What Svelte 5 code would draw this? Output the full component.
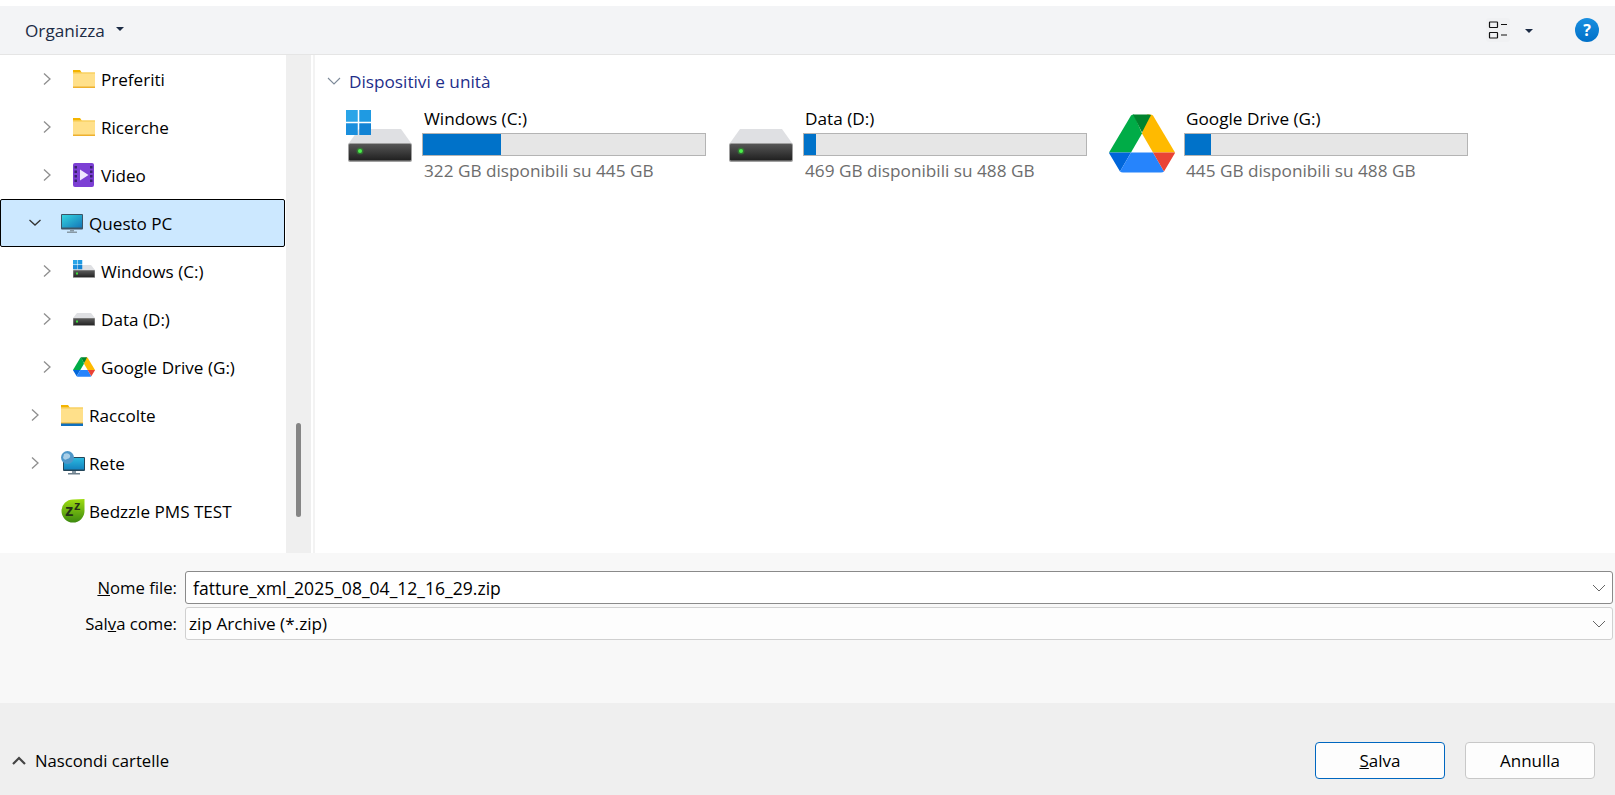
<script>
	const navRows = [
		{ label: 'Preferiti', icon: 'folder', level: 1, arrow: 'right' },
		{ label: 'Ricerche', icon: 'folder', level: 1, arrow: 'right' },
		{ label: 'Video', icon: 'video', level: 1, arrow: 'right' },
		{ label: 'Questo PC', icon: 'pc', level: 0, arrow: 'down', selected: true },
		{ label: 'Windows (C:)', icon: 'winDrive', level: 1, arrow: 'right' },
		{ label: 'Data (D:)', icon: 'drive', level: 1, arrow: 'right' },
		{ label: 'Google Drive (G:)', icon: 'gdrive', level: 1, arrow: 'right' },
		{ label: 'Raccolte', icon: 'library', level: 0, arrow: 'right' },
		{ label: 'Rete', icon: 'network', level: 0, arrow: 'right' },
		{ label: 'Bedzzle PMS TEST', icon: 'bedzzle', level: 0, arrow: '' }
	];

	const drives = [
		{ name: 'Windows (C:)', free: '322 GB disponibili su 445 GB', used: 27.7, icon: 'winDrive' },
		{ name: 'Data (D:)', free: '469 GB disponibili su 488 GB', used: 4.2, icon: 'drive' },
		{ name: 'Google Drive (G:)', free: '445 GB disponibili su 488 GB', used: 9.1, icon: 'gdrive' }
	];
</script>

{#snippet driveBody(gid)}
	<defs>
		<linearGradient id={gid} x1="0" y1="0" x2="0" y2="1">
			<stop offset="0" stop-color="#565656" />
			<stop offset="1" stop-color="#202020" />
		</linearGradient>
	</defs>
	<path d="M11 0H53L63 14H1Z" fill="#dfe0e3" />
	<rect x="0" y="14" width="64" height="19" rx="2" fill="#a0a0a0" />
	<rect x="1" y="15" width="62" height="16.500" rx="1" fill="url(#{gid})" />
	<circle cx="12" cy="22" r="3.500" fill="#2f8f2f" opacity="0.6" />
	<circle cx="12" cy="22" r="2" fill="#4cf04c" />
{/snippet}

{#snippet smallDrive(gid)}
	<defs>
		<linearGradient id={gid} x1="0" y1="0" x2="0" y2="1">
			<stop offset="0" stop-color="#5a5a5a" />
			<stop offset="1" stop-color="#262626" />
		</linearGradient>
	</defs>
	<path d="M4 0H18L22 5H0Z" fill="#dfe0e3" />
	<rect x="0" y="5" width="22" height="8" rx="0.500" fill="#9a9a9a" />
	<rect x="0.500" y="5.500" width="21" height="6.500" fill="url(#{gid})" />
	<rect x="3" y="7.500" width="2" height="2" fill="#3be03b" />
{/snippet}

{#snippet winLogo()}
	<rect x="0" y="0" width="11.5" height="11.5" fill="#2aa5e8" />
	<rect x="13" y="0" width="11.5" height="11.5" fill="#1f9ae2" />
	<rect x="0" y="13" width="11.5" height="11.5" fill="#1a8fdd" />
	<rect x="13" y="13" width="11.5" height="11.5" fill="#1283d4" />
{/snippet}

{#snippet gdriveLogo()}
	<path d="M22 1Q23 0 25 0L33 19L22 38H0Z" fill="#00ac47" />
	<path d="M44 1L66 38H44L33 19L38 0H41Q43 0 44 1Z" fill="#ffba00" />
	<path d="M24 0H40Q41 0 42 0.500L33 18Z" fill="#00832d" />
	<path d="M0 38H22L11 57L1.500 41Q0 39 0 38Z" fill="#0066da" />
	<path d="M22 38H44L55 57Q54 58 52 58H14Q12 58 11 57Z" fill="#2684fc" />
	<path d="M44 38H66Q66 39 64.500 41L55 57Z" fill="#ea4335" />
{/snippet}

{#snippet navIcon(kind)}
	{#if kind === 'folder'}
		<svg class="ic" width="22" height="18" viewBox="0 0 22 18">
			<path d="M0 0H7L9 3H0Z" fill="#f4b400" />
			<rect x="0" y="2.500" width="22" height="15.500" fill="#ffe08a" />
			<rect x="0" y="16.500" width="22" height="1.500" fill="#eeb02e" />
			<rect x="0" y="2.500" width="22" height="1" fill="#f6c94f" />
		</svg>
	{:else if kind === 'library'}
		<svg class="ic" width="22" height="21" viewBox="0 0 22 21">
			<path d="M0 0H7L9 3H0Z" fill="#f4b400" />
			<rect x="0" y="2.500" width="22" height="16" fill="#ffe08a" />
			<rect x="0" y="2.500" width="22" height="1" fill="#f6c94f" />
			<rect x="0" y="17.500" width="22" height="1.500" fill="#eeb02e" />
			<rect x="0" y="18.500" width="22" height="2.500" fill="#0f70bf" />
		</svg>
	{:else if kind === 'video'}
		<svg class="ic" width="21" height="24" viewBox="0 0 21 24">
			<rect width="21" height="24" rx="2" fill="#7c3fd4" />
			{#each [3, 7.500, 12, 16.500] as y}
				<rect x="1.500" {y} width="2.500" height="2.500" fill="#38216f" />
				<rect x="17" {y} width="2.500" height="2.500" fill="#38216f" />
			{/each}
			<path d="M7 6.500L15.500 12L7 17.500Z" fill="#f0e6ff" />
		</svg>
	{:else if kind === 'pc'}
		<svg class="ic" width="22" height="19" viewBox="0 0 22 19">
			<defs>
				<linearGradient id="pcScreen" x1="0" y1="0" x2="1" y2="1">
					<stop offset="0" stop-color="#35d4e0" />
					<stop offset="1" stop-color="#1477b8" />
				</linearGradient>
			</defs>
			<rect width="22" height="15.500" rx="1" fill="#3d5566" />
			<rect x="1" y="1" width="20" height="12.500" fill="url(#pcScreen)" />
			<rect x="9" y="15.500" width="4" height="2" fill="#8899a5" />
			<rect x="6" y="17.500" width="10" height="1.500" fill="#8899a5" />
		</svg>
	{:else if kind === 'network'}
		<svg class="ic" width="24" height="24" viewBox="0 0 24 24">
			<defs>
				<linearGradient id="netScreen" x1="0" y1="0" x2="0" y2="1">
					<stop offset="0" stop-color="#2bb8de" />
					<stop offset="1" stop-color="#1483c0" />
				</linearGradient>
			</defs>
			<rect x="2" y="6" width="22" height="14" rx="1" fill="#24465a" />
			<rect x="3" y="7" width="20" height="11.500" fill="url(#netScreen)" />
			<rect x="11" y="20" width="4" height="2" fill="#8899a5" />
			<rect x="7" y="22" width="12" height="1.500" fill="#6d7f8b" />
			<circle cx="6.500" cy="6.500" r="6.500" fill="#4e97c9" />
			<path d="M3 3Q7 1 9 4Q10 7 6 8Q4 10 2 7Z" fill="#a9cfe8" />
		</svg>
	{:else if kind === 'bedzzle'}
		<svg class="ic" width="24" height="24" viewBox="0 0 24 24">
			<defs>
				<linearGradient id="bedGreen" x1="0" y1="0" x2="0" y2="1">
					<stop offset="0" stop-color="#9edc10" />
					<stop offset="1" stop-color="#3d8a10" />
				</linearGradient>
			</defs>
			<path d="M23.500 0V12A11.500 11.500 0 1 1 12 0.500Z" fill="url(#bedGreen)" />
			<text x="4" y="17" class="zz big">z</text>
			<text x="13" y="11" class="zz">z</text>
		</svg>
	{:else if kind === 'winDrive'}
		<svg class="ic win-small" width="22" height="18" viewBox="0 0 22 18">
			<svg x="0" y="5" width="22" height="13" viewBox="0 0 22 13">{@render smallDrive('smallWin')}</svg>
			<svg x="0" y="0" width="9.500" height="9.500" viewBox="0 0 24.500 24.500">{@render winLogo()}</svg>
		</svg>
	{:else if kind === 'drive'}
		<svg class="ic" width="22" height="13" viewBox="0 0 22 13">{@render smallDrive('smallData')}</svg>
	{:else if kind === 'gdrive'}
		<svg class="ic" width="22" height="20" viewBox="0 0 66 58">{@render gdriveLogo()}</svg>
	{/if}
{/snippet}

{#snippet chevron(dir)}
	{#if dir === 'right'}
		<svg class="chev" width="12" height="14" viewBox="0 0 12 14"><path d="M3 1.500L9 7L3 12.500" fill="none" stroke="#8e8e8e" stroke-width="1.300" /></svg>
	{:else if dir === 'down'}
		<svg class="chev" width="12" height="14" viewBox="0 0 12 14"><path d="M0.500 4L6 9L11.500 4" fill="none" stroke="#333" stroke-width="1.300" /></svg>
	{:else}
		<span class="chev"></span>
	{/if}
{/snippet}

<div class="dialog">
	<header class="toolbar">
		<span class="organize">Organizza</span>
		<span class="caret small"></span>
		<span class="spacer"></span>
		<span class="view-btn">
			<svg width="24" height="24" viewBox="0 0 24 24">
				<rect x="3.500" y="4" width="8" height="5.500" rx="0.500" fill="none" stroke="#111" stroke-width="1.200" />
				<rect x="3.500" y="14.500" width="8" height="5.500" rx="0.500" fill="none" stroke="#111" stroke-width="1.200" />
				<path d="M15 6.500H21M15 17H21" stroke="#111" stroke-width="1.200" />
			</svg>
		</span>
		<span class="caret"></span>
		<span class="help">?</span>
	</header>

	<div class="middle">
		<nav class="tree">
			{#each navRows as row}
				<div class="row" class:selected={row.selected} class:nested={row.level === 1}>
					{@render chevron(row.arrow)}
					<span class="row-icon">{@render navIcon(row.icon)}</span>
					<span>{row.label}</span>
				</div>
			{/each}
		</nav>
		<div class="track"><div class="thumb"></div></div>
		<div class="gutter"></div>

		<main class="content">
			<div class="group-head">
				<svg width="14" height="10" viewBox="0 0 14 10"><path d="M1 2L7 8L13 2" fill="none" stroke="#7d8a99" stroke-width="1.100" /></svg>
				<span>Dispositivi e unità</span>
			</div>
			<div class="tiles">
				{#each drives as d, i}
					<div class="tile">
						<div class="tile-icon">
							{#if d.icon === 'gdrive'}
								<svg class="big-gdrive" width="66" height="59" viewBox="0 0 66 58">{@render gdriveLogo()}</svg>
							{:else}
								<svg class="big-drive" width="64" height="33" viewBox="0 0 64 33">{@render driveBody('bigDrive' + i)}</svg>
								{#if d.icon === 'winDrive'}
									<svg class="win-badge" width="25" height="25" viewBox="0 0 24.500 24.500">{@render winLogo()}</svg>
								{/if}
							{/if}
						</div>
						<div class="tile-text">
							<div class="tile-name">{d.name}</div>
							<div class="bar"><div class="fill" style="width: {d.used}%"></div></div>
							<div class="tile-free">{d.free}</div>
						</div>
					</div>
				{/each}
			</div>
		</main>
	</div>

	<section class="fields">
		<label for="fname"><u>N</u>ome file:</label>
		<div class="combo active">
			<input id="fname" value="fatture_xml_2025_08_04_12_16_29.zip" readonly />
			<svg width="14" height="8" viewBox="0 0 14 8"><path d="M1 1L7 7L13 1" fill="none" stroke="#666" stroke-width="1" /></svg>
		</div>
		<label for="ftype">Sal<u>v</u>a come:</label>
		<div class="combo">
			<span id="ftype" class="combo-text">zip Archive (*.zip)</span>
			<svg width="14" height="8" viewBox="0 0 14 8"><path d="M1 1L7 7L13 1" fill="none" stroke="#666" stroke-width="1" /></svg>
		</div>
	</section>

	<footer class="actions">
		<svg width="14" height="9" viewBox="0 0 14 9"><path d="M1 8L7 2L13 8" fill="none" stroke="#444" stroke-width="2.200" /></svg>
		<span class="hide-label">Nascondi cartelle</span>
		<span class="spacer"></span>
		<button class="primary"><u>S</u>alva</button>
		<button>Annulla</button>
	</footer>
</div>

<style>
	:global(body) {
		margin: 0;
		overflow: hidden;
		background: #fff;
	}

	.dialog {
		height: 795px;
		display: flex;
		flex-direction: column;
		padding-top: 6px;
		box-sizing: border-box;
		font-family: "Open Sans", "Noto Sans", sans-serif;
		font-size: 17.2px;
		color: #000;
	}

	.toolbar {
		height: 49px;
		flex: none;
		box-sizing: border-box;
		display: flex;
		align-items: center;
		background: #f3f4f6;
		border-bottom: 1px solid #e5e5e5;
		padding: 0 16px 0 25px;
		color: #1c2b45;
	}

	.organize {
		margin-right: 11px;
	}

	.spacer {
		flex: 1;
	}

	.caret {
		width: 0;
		height: 0;
		border-left: 4px solid transparent;
		border-right: 4px solid transparent;
		border-top: 4px solid #1c2b45;
		margin: 2px 42px 0 15px;
	}

	.caret.small {
		margin: 0 0 3px 0;
	}

	.view-btn {
		display: flex;
		background: #f0f1f3;
		border-radius: 3px;
	}

	.help {
		width: 24px;
		height: 24px;
		border-radius: 50%;
		background: linear-gradient(#1a8fe0, #0070c8);
		color: #fff;
		font-weight: 700;
		font-size: 16px;
		line-height: 24px;
		text-align: center;
	}

	.middle {
		height: 498px;
		flex: none;
		display: flex;
	}

	.tree {
		width: 286px;
		flex: none;
		overflow: hidden;
		font-size: 17.1px;
	}

	.row {
		height: 48px;
		box-sizing: border-box;
		display: flex;
		align-items: center;
		padding-left: 28px;
		width: 285px;
		border: 1px solid transparent;
		border-radius: 2px;
		white-space: nowrap;
	}

	.row.nested {
		padding-left: 40px;
	}

	.row.selected {
		background: #cce8ff;
		border-color: #000;
	}

	.chev {
		width: 12px;
		margin-right: 20px;
		flex: none;
	}

	.row-icon {
		width: 28px;
		flex: none;
		display: flex;
		align-items: center;
	}

	.ic {
		display: block;
	}

	.win-small {
		margin-bottom: 4px;
	}

	.zz {
		font-family: "Liberation Sans", sans-serif;
		font-weight: 700;
		font-size: 13px;
		fill: #243016;
	}

	.zz.big {
		font-size: 17px;
	}

	.track {
		width: 25px;
		flex: none;
		background: #efefef;
		padding: 368px 0 0 10px;
		box-sizing: border-box;
	}

	.thumb {
		width: 5px;
		height: 94px;
		border-radius: 3px;
		background: #858585;
	}

	.gutter {
		width: 4px;
		flex: none;
		box-sizing: border-box;
		background: #fff;
		border-right: 2px solid #f3f3f3;
	}

	.content {
		flex: 1;
		padding-top: 14px;
	}

	.group-head {
		display: flex;
		align-items: center;
		gap: 8px;
		padding-left: 12px;
		color: #1f2f8a;
		height: 24px;
	}

	.tiles {
		display: flex;
		padding: 5px 0 0 29px;
	}

	.tile {
		width: 381px;
		height: 82px;
		display: flex;
	}

	.tile-icon {
		position: relative;
		width: 78px;
		flex: none;
	}

	.tile-icon svg {
		display: block;
	}

	.big-drive {
		margin: 31px 0 0 4px;
	}

	.big-gdrive {
		margin: 16px 0 0 3px;
	}

	.win-badge {
		position: absolute;
		top: 12px;
		left: 2px;
	}

	.tile-text {
		width: 284px;
	}

	.tile-name {
		height: 26px;
		line-height: 26px;
		margin: 8px 0 1px 2px;
		white-space: nowrap;
	}

	.bar {
		height: 23px;
		box-sizing: border-box;
		border: 1px solid #b4b4b4;
		background: #e6e6e6;
	}

	.fill {
		height: 100%;
		background: #0072c9;
	}

	.tile-free {
		color: #6d6d6d;
		margin: 3px 0 0 2px;
		white-space: nowrap;
	}

	.fields {
		height: 150px;
		flex: none;
		background: #f8f8f8;
		box-sizing: border-box;
		padding: 18px 2px 0 0;
		display: grid;
		grid-template-columns: 177px 1fr;
		grid-template-rows: 33px 33px;
		column-gap: 8px;
		row-gap: 3px;
		align-items: center;
	}

	label {
		text-align: right;
		font-size: 16.7px;
	}

	.combo {
		height: 33px;
		box-sizing: border-box;
		display: flex;
		align-items: center;
		background: #fdfdfd;
		border: 1px solid #d0d0d0;
		border-radius: 3px;
		padding: 0 6px 0 3px;
	}

	.combo.active {
		background: #fff;
		border-color: #8a8a8a;
		padding-left: 7px;
		font-size: 17.55px;
	}

	.combo input,
	.combo-text {
		flex: 1;
		border: 0;
		outline: 0;
		padding: 0;
		background: none;
		font: inherit;
		color: inherit;
	}

	.actions {
		height: 92px;
		flex: none;
		background: #efefef;
		display: flex;
		align-items: center;
		padding: 22px 20px 0 12px;
		box-sizing: border-box;
	}

	.hide-label {
		margin-left: 9px;
		font-size: 16.7px;
	}

	button {
		width: 130px;
		height: 37px;
		box-sizing: border-box;
		border: 1px solid #c8c8c8;
		border-radius: 4px;
		background: #fdfdfd;
		font: inherit;
		font-size: 17px;
		color: #000;
		margin-left: 20px;
		padding: 0;
	}

	button.primary {
		border-color: #0067c0;
	}
</style>
